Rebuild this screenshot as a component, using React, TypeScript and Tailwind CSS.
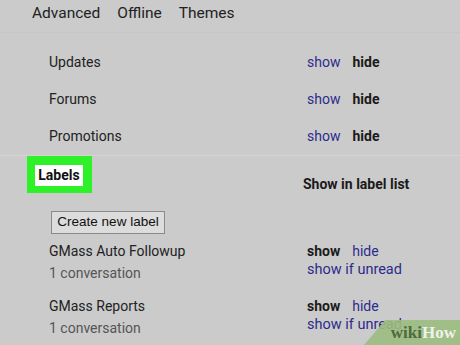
import React from "react";

const font = { fontFamily: "Roboto, 'Liberation Sans', sans-serif" };

function ShowHideRow({ name }: { name: string }) {
  return (
    <div className="flex h-[37px] items-center">
      <span className="w-[258px] text-[14px] text-[#222]">{name}</span>
      <span className="text-[14px] text-[#2b2b8c]">show</span>
      <span className="ml-[12px] text-[14px] font-bold text-[#1a1a1a]">hide</span>
    </div>
  );
}

function LabelRow({ name }: { name: string }) {
  return (
    <div className="flex h-[55px] pt-[6px]">
      <div className="flex w-[258px] flex-col">
        <span className="text-[14px] leading-[20px] text-[#222]">{name}</span>
        <span className="mt-[2px] text-[14px] leading-[20px] text-[#555]">1 conversation</span>
      </div>
      <div className="flex flex-col">
        <div className="flex leading-[20px]">
          <span className="text-[14px] font-bold text-[#1a1a1a]">show</span>
          <span className="ml-[12px] text-[14px] text-[#2b2b8c]">hide</span>
        </div>
        <span className="-mt-[1px] text-[14.5px] leading-[20px] text-[#2b2b8c]">show if unread</span>
      </div>
    </div>
  );
}

export default function App() {
  return (
    <div className="relative h-[345px] w-[460px] overflow-hidden bg-[#cbcbcb]" style={font}>
      <div className="flex h-[33px] items-center gap-[17px] border-b border-[#c6c6c6] pl-[32px] pb-[4px] text-[15.5px] text-[#222]">
        <span>Advanced</span>
        <span>Offline</span>
        <span>Themes</span>
      </div>

      <div className="border-b border-[#d4d4d4] pl-[49px] pt-[11px]">
        <ShowHideRow name="Updates" />
        <ShowHideRow name="Forums" />
        <ShowHideRow name="Promotions" />
      </div>

      <div className="flex">
        <div className="ml-[27px] flex h-[37px] w-[65px] items-start bg-[#2ff12a] pl-[8px] pt-[9px]">
          <span className="flex h-[21px] w-[48px] items-center justify-center bg-white text-[14px] font-bold text-[#111]">
            Labels
          </span>
        </div>
        <span className="ml-[211px] mt-[18px] text-[14px] font-bold text-[#1a1a1a]">
          Show in label list
        </span>
      </div>

      <div className="pl-[51px] pt-[14px]">
        <button
          type="button"
          className="h-[23px] w-[114px] border border-[#8a8a8a] bg-[#dcdcdc] text-[13.5px] text-[#111]"
          style={{ fontFamily: "'Liberation Sans', Arial, sans-serif" }}
        >
          Create new label
        </button>
      </div>

      <div className="pl-[49px] pt-[1px]">
        <LabelRow name="GMass Auto Followup" />
        <LabelRow name="GMass Reports" />
      </div>

      <div
        className="absolute bottom-0 right-0 flex h-[25px] w-[96px] items-center justify-end pr-[4px] bg-[#9bbc7f]/90"
        style={{ clipPath: "polygon(22% 0, 100% 0, 100% 100%, 0 100%)" }}
      >
        <span
          className="text-[17px] font-bold leading-none"
          style={{ fontFamily: "'Liberation Serif', 'DejaVu Serif', serif" }}
        >
          <span className="text-[#4f6a3c]">wiki</span>
          <span className="text-[#eef2e8]">How</span>
        </span>
      </div>
    </div>
  );
}
